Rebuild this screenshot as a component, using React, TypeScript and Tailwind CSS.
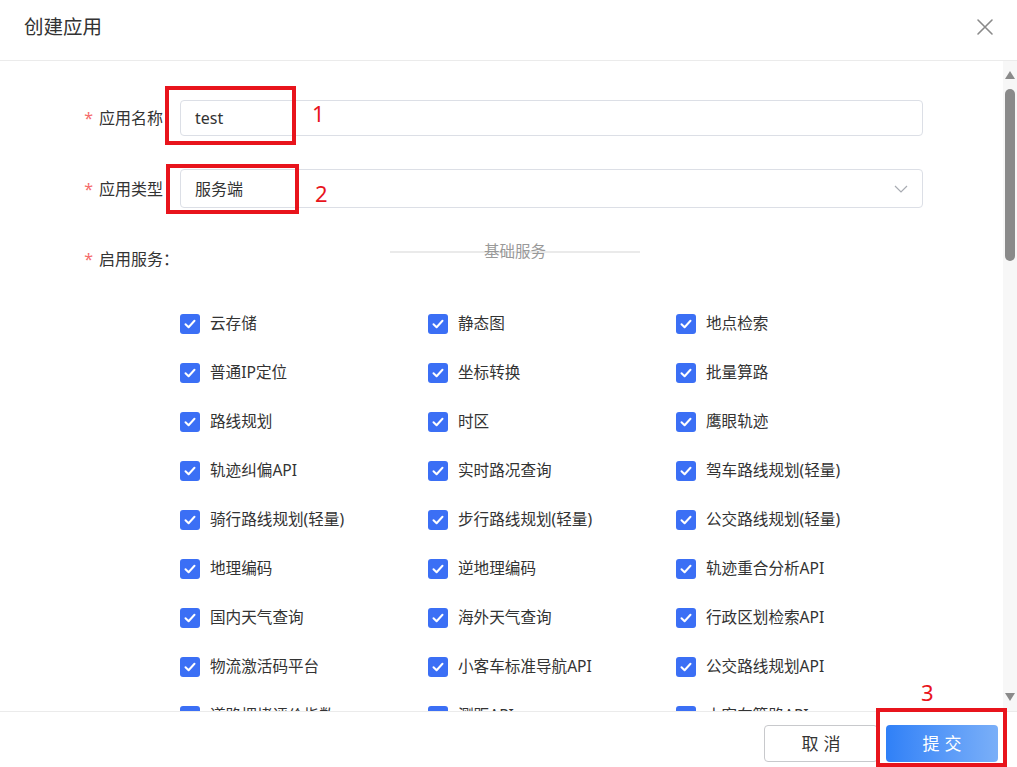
import React from "react";

const services: string[][] = [
  ["云存储", "静态图", "地点检索"],
  ["普通IP定位", "坐标转换", "批量算路"],
  ["路线规划", "时区", "鹰眼轨迹"],
  ["轨迹纠偏API", "实时路况查询", "驾车路线规划(轻量)"],
  ["骑行路线规划(轻量)", "步行路线规划(轻量)", "公交路线规划(轻量)"],
  ["地理编码", "逆地理编码", "轨迹重合分析API"],
  ["国内天气查询", "海外天气查询", "行政区划检索API"],
  ["物流激活码平台", "小客车标准导航API", "公交路线规划API"],
  ["道路拥堵评价指数", "测距API", "小客车算路API"],
];

function Check() {
  return (
    <span className="flex h-[20px] w-[20px] shrink-0 items-center justify-center rounded-[3px] bg-[#3b6ff5]">
      <svg width="12" height="10" viewBox="0 0 12 10" fill="none">
        <path d="M1.5 5.2 L4.6 8.2 L10.5 1.8" stroke="white" strokeWidth="2" strokeLinecap="round" strokeLinejoin="round" />
      </svg>
    </span>
  );
}

function Label({ text, width = "w-[163px]" }: { text: string; width?: string }) {
  return (
    <div className={`flex ${width} shrink-0 items-center justify-end text-[16px] text-[#333]`}>
      <span className="mr-[6px] text-[#f56c6c]">*</span>
      <span>{text}</span>
    </div>
  );
}

export default function App() {
  return (
    <div
      className="relative flex h-[767px] w-[1017px] flex-col overflow-hidden bg-white"
      style={{ fontFamily: '"Noto Sans", "Noto Sans CJK SC", sans-serif' }}
    >
      {/* header */}
      <div className="flex h-[61px] shrink-0 items-center justify-between border-b border-[#ebebeb] pl-[24px] pr-[23px]">
        <div className="mb-[6px] text-[19.5px] text-[#333]">创建应用</div>
        <svg className="mb-[6px]" width="18" height="18" viewBox="0 0 18 18">
          <path d="M2 2 L16 16 M16 2 L2 16" stroke="#8a8a8a" strokeWidth="1.6" strokeLinecap="round" />
        </svg>
      </div>

      {/* body */}
      <div className="flex h-[650px] shrink-0">
        <div className="flex-1 overflow-hidden">
          <div className="pt-[39px]">
            <div className="flex items-center">
              <Label text="应用名称" />
              <div className="ml-[17px] flex h-[36px] w-[743px] items-center rounded-[4px] border border-[#dcdfe6] px-[14px] text-[16px] text-[#333]">
                test
              </div>
            </div>
            <div className="mt-[33px] flex items-center">
              <Label text="应用类型" />
              <div className="ml-[17px] flex h-[39px] w-[743px] items-center justify-between rounded-[4px] border border-[#dcdfe6] pl-[14px] pr-[14px] text-[16px] text-[#333]">
                <span>服务端</span>
                <svg width="14" height="8" viewBox="0 0 14 8">
                  <path d="M1 1 L7 7 L13 1" stroke="#a8abb2" strokeWidth="1.2" fill="none" />
                </svg>
              </div>
            </div>
            <div className="mt-[31px] flex items-start">
              <div className="mt-[8px]">
                <Label text="启用服务：" width="w-[179px]" />
              </div>
              <div className="ml-[211px] mt-[2px] flex h-[20px] w-[250px] items-center">
                <div className="relative flex h-[20px] w-full items-center justify-center">
                  <div className="absolute left-0 right-0 top-[10px] h-[2px] bg-[#eaeaea]" />
                  <span className="relative text-[15.5px] leading-[20px] text-[#999]">基础服务</span>
                </div>
              </div>
            </div>
            <div className="ml-[180px] mt-[43px] flex flex-col gap-[29px]">
              {services.map((row, i) => (
                <div key={i} className="grid grid-cols-[248px_248px_248px]">
                  {row.map((s) => (
                    <div key={s} className="flex h-[20px] items-center">
                      <Check />
                      <span className="ml-[10px] whitespace-nowrap text-[15.6px] text-[#333]">{s}</span>
                    </div>
                  ))}
                </div>
              ))}
            </div>
          </div>
        </div>
        {/* scrollbar */}
        <div className="flex w-[14px] shrink-0 flex-col items-center bg-[#f7f7f7]">
          <svg className="mt-[10px]" width="10" height="8" viewBox="0 0 10 8">
            <path d="M5 0 L10 8 L0 8 Z" fill="#8a8a8a" />
          </svg>
          <div className="mt-[10px] h-[172px] w-[10px] rounded-[5px] bg-[#8a8a8a]" />
          <div className="flex-1" />
          <svg className="mb-[10px]" width="10" height="8" viewBox="0 0 10 8">
            <path d="M0 0 L10 0 L5 8 Z" fill="#8a8a8a" />
          </svg>
        </div>
      </div>

      {/* footer */}
      <div className="flex flex-1 items-start justify-end gap-[8px] border-t border-[#ebebeb] pr-[19px] pt-[13px]">
        <button className="flex h-[37px] w-[114px] items-center justify-center rounded-[4px] border border-[#c8c9cc] bg-white pl-[5px] text-[17px] tracking-[5px] text-[#333]">
          取消
        </button>
        <button className="flex h-[37px] w-[112px] items-center justify-center rounded-[4px] bg-gradient-to-r from-[#2f80f7] to-[#7aaff8] pl-[5px] text-[17px] tracking-[5px] text-white">
          提交
        </button>
      </div>

      {/* annotations */}
      <div className="absolute left-[165px] top-[86px] h-[59px] w-[131px] border-[4px] border-[#e8141c]" />
      <div className="absolute left-[312px] top-[98px] text-[22px] leading-[30px] text-[#e8141c]">1</div>
      <div className="absolute left-[166px] top-[164px] h-[50px] w-[133px] border-[4px] border-[#e8141c]" />
      <div className="absolute left-[315px] top-[178px] text-[22px] leading-[30px] text-[#e8141c]">2</div>
      <div className="absolute left-[876px] top-[708px] h-[59px] w-[131px] border-[4px] border-[#e8141c]" />
      <div className="absolute left-[921px] top-[677px] text-[22px] leading-[30px] text-[#e8141c]">3</div>
    </div>
  );
}
